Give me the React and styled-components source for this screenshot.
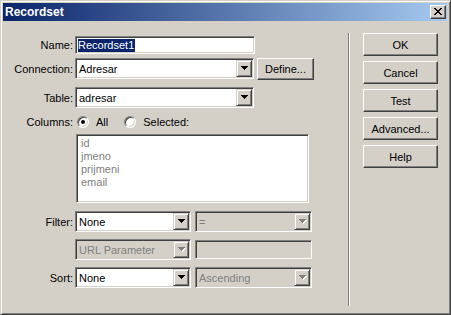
import React from "react";
import styled, { createGlobalStyle, css } from "styled-components";

const FACE = "#d4d0c8";
const LIGHT = "#ffffff";
const SHADOW = "#808080";
const DARK = "#404040";

const Global = createGlobalStyle`
  html, body { margin: 0; padding: 0; background: ${FACE}; }
  body { font-family: "Liberation Sans", Arial, sans-serif; font-size: 11px; color: #000; }
  * { box-sizing: border-box; }
`;

const sunken = css`
  border: 1px solid;
  border-color: ${SHADOW} ${LIGHT} ${LIGHT} ${SHADOW};
  box-shadow: inset 1px 1px 0 ${DARK}, inset -1px -1px 0 ${FACE};
`;

const raised = css`
  border: 1px solid;
  border-color: ${FACE} ${DARK} ${DARK} ${FACE};
  box-shadow: inset 1px 1px 0 ${LIGHT}, inset -1px -1px 0 ${SHADOW};
`;

const Window = styled.div`
  width: 451px;
  height: 315px;
  background: ${FACE};
  border: 1px solid;
  border-color: ${FACE} ${DARK} ${DARK} ${FACE};
  box-shadow: inset 1px 1px 0 ${LIGHT}, inset -1px -1px 0 ${SHADOW};
  padding: 2px 3px 3px 2px;
  display: flex;
  flex-direction: column;
`;

const TitleBar = styled.div`
  height: 18px;
  flex-shrink: 0;
  background: linear-gradient(to right, #0a246a, #a6caf0);
  display: flex;
  align-items: center;
  justify-content: space-between;
  padding: 0 1px 0 2px;
`;

const TitleText = styled.span`
  color: #fff;
  font-weight: bold;
  font-size: 12px;
  line-height: 14px;
`;

const CloseButton = styled.div`
  width: 16px;
  height: 14px;
  background: ${FACE};
  border: 1px solid;
  border-color: ${LIGHT} ${DARK} ${DARK} ${LIGHT};
  box-shadow: inset -1px -1px 0 ${SHADOW};
  display: flex;
  align-items: center;
  justify-content: center;
  padding: 0 1px 1px 0;
`;

const Body = styled.div`
  flex: 1;
  display: flex;
`;

const FormCol = styled.div`
  width: 345px;
  flex-shrink: 0;
  padding-top: 15px;
  display: flex;
  flex-direction: column;
`;

const Row = styled.div`
  display: flex;
  align-items: center;
  height: ${(p) => p.$h}px;
  margin-top: ${(p) => p.$mt || 0}px;
  gap: ${(p) => p.$gap || 0}px;
`;

const Label = styled.span`
  width: 70px;
  margin-right: 2px;
  text-align: right;
  flex-shrink: 0;
  white-space: nowrap;
  align-self: ${(p) => (p.$top ? "flex-start" : "center")};
`;

const TextBox = styled.div`
  ${sunken};
  width: ${(p) => p.$w}px;
  height: ${(p) => p.$h || 18}px;
  background: ${(p) => (p.$disabled ? FACE : "#fff")};
  display: flex;
  align-items: center;
  padding: 0 2px;
`;

const Selected = styled.span`
  background: #0a246a;
  color: #fff;
  line-height: 13px;
  padding: 0 1px 0 0;
`;

const SelectBox = styled.div`
  ${sunken};
  width: ${(p) => p.$w}px;
  height: 21px;
  padding: 1px;
  background: ${(p) => (p.$disabled ? FACE : "#fff")};
  display: flex;
  flex-shrink: 0;
`;

const SelectValue = styled.span`
  flex: 1;
  padding-left: 2px;
  display: flex;
  align-items: center;
  color: ${(p) => (p.$disabled ? SHADOW : "#000")};
  white-space: nowrap;
  overflow: hidden;
`;

const DropButton = styled.div`
  ${raised};
  width: 16px;
  height: 100%;
  background: ${FACE};
  display: flex;
  align-items: center;
  justify-content: center;
  padding-left: 1px;
`;

const PushButton = styled.div`
  width: ${(p) => p.$w || 75}px;
  height: ${(p) => p.$h || 23}px;
  background: ${FACE};
  border: 1px solid;
  border-color: ${LIGHT} ${DARK} ${DARK} ${LIGHT};
  box-shadow: inset -1px -1px 0 ${SHADOW};
  display: flex;
  align-items: center;
  justify-content: center;
  flex-shrink: 0;
  margin-left: ${(p) => p.$ml || 0}px;
  margin-top: ${(p) => p.$mtop || 0}px;
  white-space: nowrap;
`;

const RadioGroup = styled.label`
  display: flex;
  align-items: center;
  gap: 7px;
  margin-left: ${(p) => p.$ml}px;
`;

const Radio = styled.span`
  position: relative;
  width: 12px;
  height: 12px;
  border-radius: 50%;
  border: 1px solid;
  border-color: ${SHADOW} ${LIGHT} ${LIGHT} ${SHADOW};
  box-shadow: inset 1px 1px 0 ${DARK}, inset -1px -1px 0 ${FACE};
  background: #fff;
  flex-shrink: 0;
  ${(p) =>
    p.$checked &&
    css`
      &::after {
        content: "";
        position: absolute;
        left: 3px;
        top: 3px;
        width: 4px;
        height: 4px;
        border-radius: 50%;
        background: #000;
      }
    `}
`;

const ListBox = styled.div`
  ${sunken};
  width: 233px;
  height: 69px;
  margin-left: 1px;
  background: #fff;
  padding: 2px 4px;
  display: flex;
  flex-direction: column;
`;

const ListItem = styled.span`
  color: ${SHADOW};
  line-height: 13px;
`;

const Separator = styled.div`
  width: 2px;
  height: 273px;
  margin-top: 12px;
  border-left: 1px solid ${SHADOW};
  border-right: 1px solid ${LIGHT};
  flex-shrink: 0;
`;

const ButtonCol = styled.div`
  margin-left: 13px;
  padding-top: 12px;
  display: flex;
  flex-direction: column;
  gap: 5px;
`;

const Arrow = ({ disabled }) => (
  <svg width="8" height="5" viewBox="0 0 8 5" shapeRendering="crispEdges">
    {disabled && (
      <path d="M1 1h7v1h-1v1h-1v1h-1v1h-1v-1h-1v-1h-1v-1h-1z" fill="#fff" />
    )}
    <path
      d="M0 0h7v1h-1v1h-1v1h-1v1h-1v-1h-1v-1h-1v-1h-1z"
      fill={disabled ? SHADOW : "#000"}
    />
  </svg>
);

const CloseGlyph = () => (
  <svg width="8" height="7" viewBox="0 0 8 7" shapeRendering="crispEdges">
    <path
      d="M0 0h2v1h1v1h2v-1h1v-1h2v1h-1v1h-1v1h-1v1h1v1h1v1h1v1h-2v-1h-1v-1h-2v1h-1v1h-2v-1h1v-1h1v-1h1v-1h-1v-1h-1v-1h-1z"
      fill="#000"
    />
  </svg>
);

const Select = ({ w, value, disabled }) => (
  <SelectBox $w={w} $disabled={disabled}>
    <SelectValue $disabled={disabled}>{value}</SelectValue>
    <DropButton>
      <Arrow disabled={disabled} />
    </DropButton>
  </SelectBox>
);

export default function App() {
  return (
    <>
      <Global />
      <Window>
        <TitleBar>
          <TitleText>Recordset</TitleText>
          <CloseButton>
            <CloseGlyph />
          </CloseButton>
        </TitleBar>
        <Body>
          <FormCol>
            <Row $h={18}>
              <Label>Name:</Label>
              <TextBox $w={180}>
                <Selected>Recordset1</Selected>
              </TextBox>
            </Row>
            <Row $h={21} $mt={4}>
              <Label>Connection:</Label>
              <Select w={179} value="Adresar" />
              <PushButton $w={57} $h={22} $ml={3} $mtop={1}>
                Define...
              </PushButton>
            </Row>
            <Row $h={21} $mt={8}>
              <Label>Table:</Label>
              <Select w={179} value="adresar" />
            </Row>
            <Row $h={14} $mt={7}>
              <Label>Columns:</Label>
              <RadioGroup $ml={2}>
                <Radio $checked />
                <span>All</span>
              </RadioGroup>
              <RadioGroup $ml={16}>
                <Radio />
                <span>Selected:</span>
              </RadioGroup>
            </Row>
            <Row $h={69} $mt={5}>
              <Label />
              <ListBox>
                <ListItem>id</ListItem>
                <ListItem>jmeno</ListItem>
                <ListItem>prijmeni</ListItem>
                <ListItem>email</ListItem>
              </ListBox>
            </Row>
            <Row $h={21} $mt={8}>
              <Label>Filter:</Label>
              <Select w={116} value="None" />
              <PushButtonSpacer />
              <Select w={117} value="=" disabled />
            </Row>
            <Row $h={21} $mt={7}>
              <Label />
              <Select w={116} value="URL Parameter" disabled />
              <PushButtonSpacer />
              <TextBox $w={117} $h={19} $disabled />
            </Row>
            <Row $h={21} $mt={7}>
              <Label>Sort:</Label>
              <Select w={116} value="None" />
              <PushButtonSpacer />
              <Select w={117} value="Ascending" disabled />
            </Row>
          </FormCol>
          <Separator />
          <ButtonCol>
            <PushButton>OK</PushButton>
            <PushButton>Cancel</PushButton>
            <PushButton>Test</PushButton>
            <PushButton>Advanced...</PushButton>
            <PushButton>Help</PushButton>
          </ButtonCol>
        </Body>
      </Window>
    </>
  );
}

const PushButtonSpacer = styled.span`
  width: 4px;
  flex-shrink: 0;
`;
